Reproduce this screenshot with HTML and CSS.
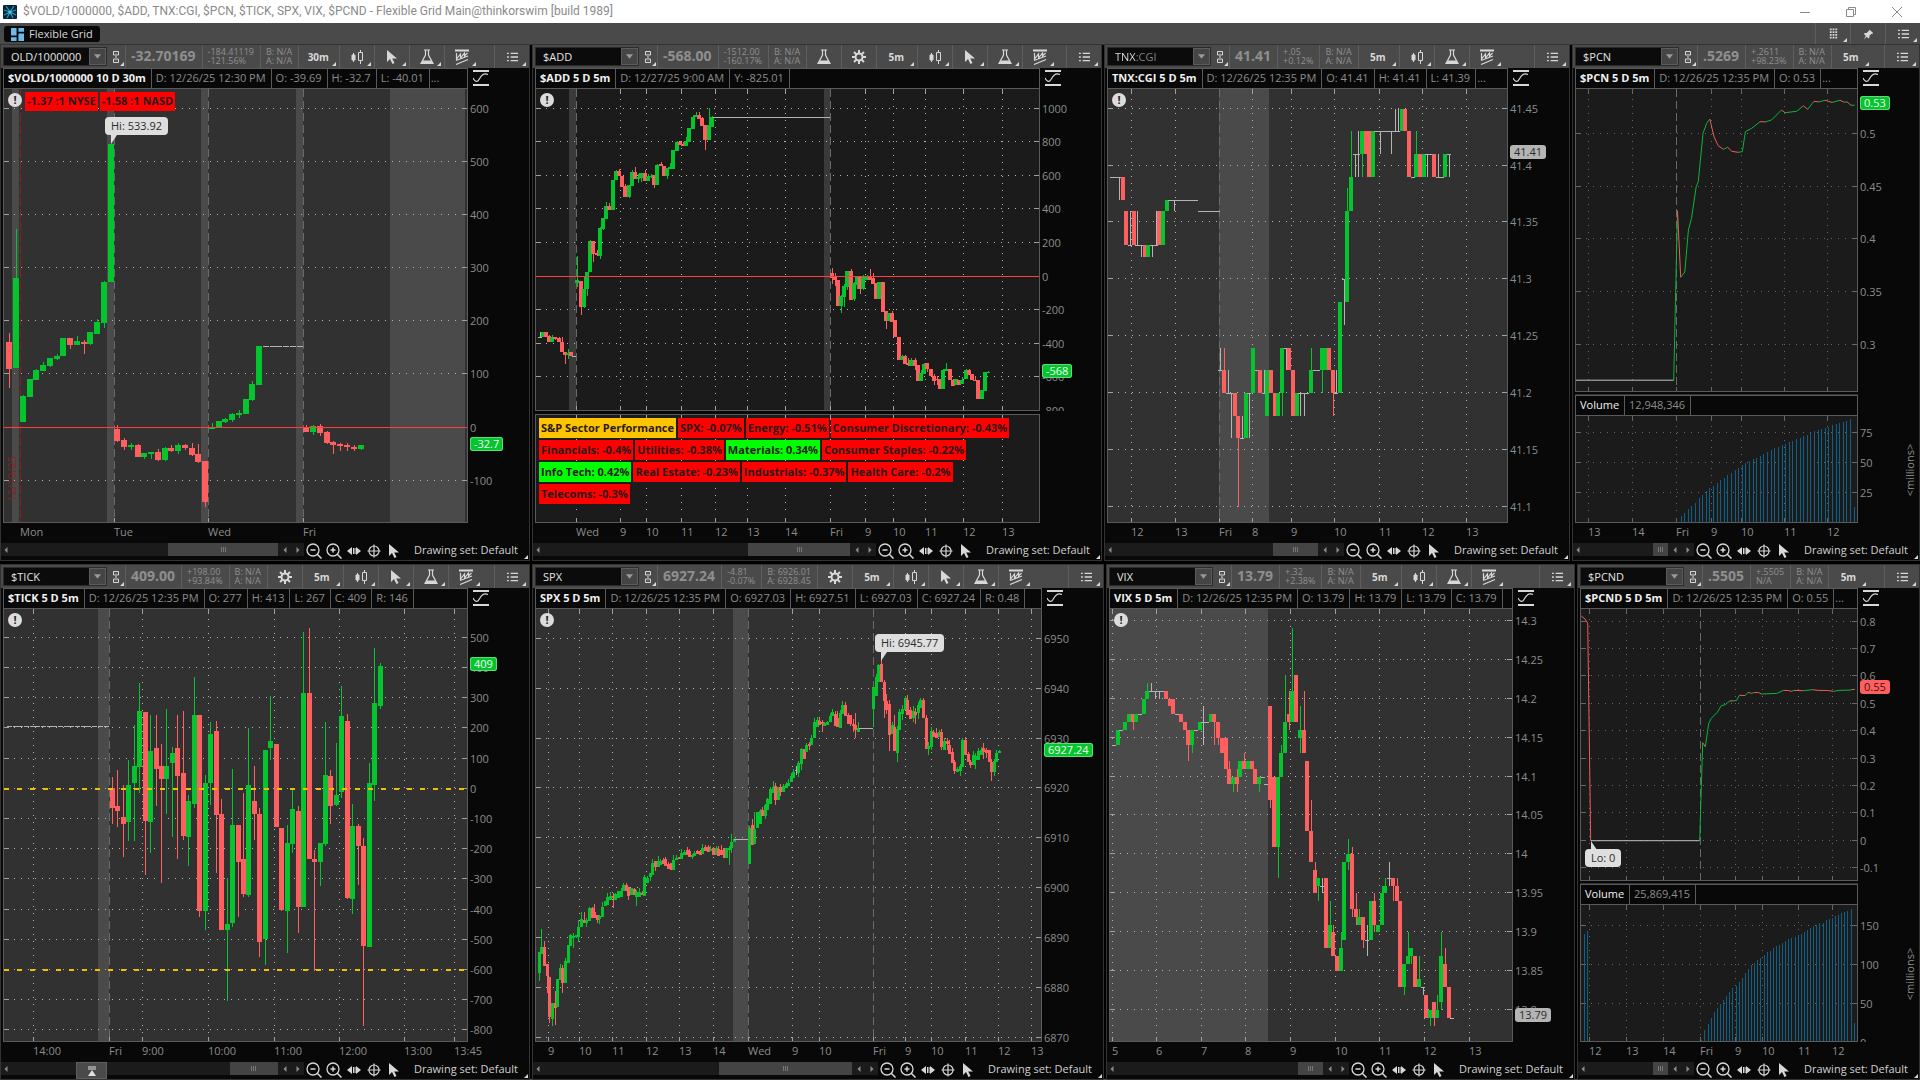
FILE: index.html
```html
<!DOCTYPE html>
<html lang="en">
<head>
<meta charset="utf-8">
<meta name="viewport" content="width=device-width, initial-scale=1">
<title>Flexible Grid Main@thinkorswim [build 1989]</title>
<link rel="stylesheet" href="styles.css">
</head>
<body>
<svg class="sprite" aria-hidden="true">
  <symbol id="i-link" viewBox="0 0 8 14"><path d="M1.500 5V1.500h5V5M1.500 9v3.500h5V9M4 3.500v7M1.500 5h1.500M5 5h1.500M1.500 9h1.500M5 9h1.500" fill="none" stroke="currentColor"/></symbol>
  <symbol id="i-candles" viewBox="0 0 16 16"><path d="M4.500 4v9M11.500 1v14" stroke="currentColor"/><path d="M3 6h3v5H3z" fill="currentColor" stroke="currentColor"/><path d="M9.500 3.500h4v8h-4z" fill="#4a4a4a" stroke="currentColor"/></symbol>
  <symbol id="i-cursor" viewBox="0 0 16 16"><path d="M3 1v12l3-3 2.500 5 2-1L8.200 9.500H13z" fill="currentColor"/></symbol>
  <symbol id="i-flask" viewBox="0 0 16 16"><path d="M5 1h6M6.500 1v5L2 14.500h12L9.500 6V1" fill="none" stroke="currentColor" stroke-width="1.200"/><path d="M4 11.500h8l2 3.500h-12z" fill="currentColor"/></symbol>
  <symbol id="i-pattern" viewBox="0 0 16 16"><path d="M1 1.500h14" stroke="currentColor" stroke-width="2"/><path d="M2.500 4v6l4-5v4l4-5v3l3-3M2 11.500l12-4.500M2 15.500l12-5" fill="none" stroke="currentColor" stroke-width="1.200"/></symbol>
  <symbol id="i-list" viewBox="0 0 12 12"><path d="M0 2h2M4 2h8M0 6h2M4 6h8M0 10h2M4 10h8" stroke="currentColor" stroke-width="1.500"/></symbol>
  <symbol id="i-gear" viewBox="0 0 16 16"><circle cx="8" cy="8" r="3.500" fill="none" stroke="currentColor" stroke-width="2"/><path d="M8 1v3M8 12v3M1 8h3M12 8h3M3 3l2.300 2.300M10.700 10.700L13 13M13 3l-2.300 2.300M5.300 10.700L3 13" stroke="currentColor" stroke-width="2"/></symbol>
  <symbol id="i-scale" viewBox="0 0 16 16"><path d="M0 1h16M0 15h16" stroke="currentColor" stroke-width="2"/><path d="M0 8c1.500 3 4 5 6 1.500S10 2.500 15 4.500" fill="none" stroke="currentColor" stroke-width="1.200"/></symbol>
  <symbol id="i-zoomout" viewBox="0 0 16 16"><circle cx="7" cy="7" r="6" fill="none" stroke="currentColor" stroke-width="1.300"/><path d="M4.500 7h5M11 11l4.500 4.500" stroke="currentColor" stroke-width="1.500"/></symbol>
  <symbol id="i-zoomin" viewBox="0 0 16 16"><circle cx="7" cy="7" r="6" fill="none" stroke="currentColor" stroke-width="1.300"/><path d="M4.500 7h5M7 4.500v5M11 11l4.500 4.500" stroke="currentColor" stroke-width="1.500"/></symbol>
  <symbol id="i-move" viewBox="0 0 16 16"><path d="M1 8l5-4v8zM15 8l-5-4v8z" fill="currentColor"/><path d="M7.500 5v6M9 5v6" stroke="currentColor"/></symbol>
  <symbol id="i-cross" viewBox="0 0 16 16"><circle cx="8" cy="8" r="5" fill="none" stroke="currentColor" stroke-width="1.200"/><path d="M8 1.500v13M1.500 8h13" stroke="currentColor" stroke-width="1.200"/></symbol>
  <symbol id="i-down" viewBox="0 0 8 5"><path d="M0 0h8L4 5z" fill="currentColor"/></symbol>
  <symbol id="i-left" viewBox="0 0 4 8"><path d="M4 0v8L0 4z" fill="currentColor"/></symbol>
  <symbol id="i-right" viewBox="0 0 4 8"><path d="M0 0v8l4-4z" fill="currentColor"/></symbol>
</svg>

<header class="titlebar">
  <svg class="app-icon" viewBox="0 0 14 14"><rect width="14" height="14" rx="1" fill="#082335"/><path d="M7 7L3 1M7 7l4-6M7 7L1 5M7 7l6-2M7 7l-6 3M7 7l6 3M7 7l-3 6M7 7l3 6" stroke="#1d9bbf" stroke-width="1.300"/><circle cx="7" cy="7" r="1.500" fill="#49c8e6"/></svg>
  <h1 class="window-title">$VOLD/1000000, $ADD, TNX:CGI, $PCN, $TICK, SPX, VIX, $PCND - Flexible Grid Main@thinkorswim [build 1989]</h1>
  <div class="window-controls">
    <button aria-label="Minimize"><svg viewBox="0 0 10 10"><path d="M0 5.500h10" stroke="currentColor"/></svg></button>
    <button aria-label="Restore"><svg viewBox="0 0 10 10"><path d="M.5 2.500h7v7h-7zM2.500 2.500v-2h7v7h-2" fill="none" stroke="currentColor"/></svg></button>
    <button aria-label="Close"><svg viewBox="0 0 10 10"><path d="M0 0l10 10M10 0L0 10" stroke="currentColor"/></svg></button>
  </div>
</header>

<nav class="tabbar">
  <button class="tab"><svg viewBox="0 0 14 14"><path d="M0 0h6v8H0zM8 0h6v4H8zM0 10h6v4H0zM8 6h6v8H8z" fill="#6db9e8"/></svg>Flexible Grid</button>
  <div class="tabbar-tools">
    <button class="tool more" aria-label="Layout grid"><svg class="icon-s" viewBox="0 0 12 12"><path d="M2 1h2M5 1h2M8 1h2M2 4h2M5 4h2M8 4h2M2 7h2M5 7h2M8 7h2M2 10h2M5 10h2M8 10h2" stroke="currentColor" stroke-width="2"/></svg></button>
    <button class="tool" aria-label="Pin"><svg class="icon-s" viewBox="0 0 12 12"><path d="M7 1l4 4-1 1-1 0-2 2 0 2-1 1-2-2-3 3 2-4-2-2 1-1h2l3-3z" fill="currentColor"/></svg></button>
    <button class="tool more" aria-label="Menu"><svg class="icon-s"><use href="#i-list"/></svg></button>
  </div>
</nav>

<main class="workspace">
<div class="panel-row panel-row-top">

<section class="panel">
  <div class="toolbar">
    <div class="symbol"><input aria-label="Symbol" value="OLD/1000000"><button aria-label="Symbols"><svg><use href="#i-down"/></svg></button></div>
    <button class="link more" aria-label="Link"><svg><use href="#i-link"/></svg></button>
    <strong class="last">-32.70169</strong>
    <div class="pair"><span>-184.41119</span><span>-121.56%</span></div>
    <div class="pair"><span>B: N/A</span><span>A: N/A</span></div>
    <button class="tool more period">30m</button>
    <button class="tool more" aria-label="Style"><svg><use href="#i-candles"/></svg></button>
    <button class="tool more" aria-label="Pointer"><svg><use href="#i-cursor"/></svg></button>
    <button class="tool more" aria-label="Studies"><svg><use href="#i-flask"/></svg></button>
    <button class="tool more" aria-label="Patterns"><svg><use href="#i-pattern"/></svg></button>
    <button class="tool more menu" aria-label="Menu"><svg class="icon-s"><use href="#i-list"/></svg></button>
  </div>
  <div class="chart">
    <div class="infobar"><div class="info"><b>$VOLD/1000000 10 D 30m</b><span>D: 12/26/25 12:30 PM</span><span>O: -39.69</span><span>H: -32.7</span><span>L: -40.01</span><i>...</i></div><button aria-label="Scale"><svg><use href="#i-scale"/></svg></button></div>
    <div class="pane"><div class="plot" data-chart="vold">
      <div class="labels"><span class="alert">!</span><span class="chip down">-1.37 :1 NYSE</span><span class="chip down">-1.58 :1 NASD</span></div>
      <span class="expiry">12/19/25</span>
    </div><div class="price-axis"></div></div>
    <div class="time-axis"></div>
  </div>
  <div class="footer"><div class="scroll"><button aria-label="Back"><svg><use href="#i-left"/></svg></button><div class="track"><div class="thumb" style="width:41%"></div></div><button aria-label="Left"><svg><use href="#i-left"/></svg></button><button aria-label="Right"><svg><use href="#i-right"/></svg></button></div><div class="footer-tools"><button aria-label="Zoom out"><svg><use href="#i-zoomout"/></svg></button><button aria-label="Zoom in"><svg><use href="#i-zoomin"/></svg></button><button aria-label="Pan"><svg><use href="#i-move"/></svg></button><button aria-label="Crosshair"><svg><use href="#i-cross"/></svg></button><button aria-label="Pointer"><svg><use href="#i-cursor"/></svg></button></div><button class="drawing more">Drawing set: Default</button></div>
</section>

<section class="panel">
  <div class="toolbar">
    <div class="symbol"><input aria-label="Symbol" value="$ADD"><button aria-label="Symbols"><svg><use href="#i-down"/></svg></button></div>
    <button class="link more" aria-label="Link"><svg><use href="#i-link"/></svg></button>
    <strong class="last">-568.00</strong>
    <div class="pair"><span>-1512.00</span><span>-160.17%</span></div>
    <div class="pair"><span>B: N/A</span><span>A: N/A</span></div>
    <button class="tool" aria-label="Edit studies"><svg><use href="#i-flask"/></svg></button>
    <button class="tool" aria-label="Settings"><svg><use href="#i-gear"/></svg></button>
    <button class="tool more period">5m</button>
    <button class="tool more" aria-label="Style"><svg><use href="#i-candles"/></svg></button>
    <button class="tool more" aria-label="Pointer"><svg><use href="#i-cursor"/></svg></button>
    <button class="tool more" aria-label="Studies"><svg><use href="#i-flask"/></svg></button>
    <button class="tool more" aria-label="Patterns"><svg><use href="#i-pattern"/></svg></button>
    <button class="tool more menu" aria-label="Menu"><svg class="icon-s"><use href="#i-list"/></svg></button>
  </div>
  <div class="chart">
    <div class="infobar"><div class="info"><b>$ADD 5 D 5m</b><span>D: 12/27/25 9:00 AM</span><span>Y: -825.01</span></div><button aria-label="Scale"><svg><use href="#i-scale"/></svg></button></div>
    <div class="pane pane-add"><div class="plot dark" data-chart="add"><div class="labels"><span class="alert">!</span></div></div><div class="price-axis"></div></div>
    <div class="splitter splitter-wide"></div>
    <div class="pane pane-sectors"><div class="plot dark framed" data-chart="sectors">
      <div class="sector-rows">
        <div><span class="chip title">S&amp;P Sector Performance</span><span class="chip down">SPX: -0.07%</span><span class="chip down">Energy: -0.51%</span><span class="chip down">Consumer Discretionary: -0.43%</span></div>
        <div><span class="chip down">Financials: -0.4%</span><span class="chip down">Utilities: -0.38%</span><span class="chip up">Materials: 0.34%</span><span class="chip down">Consumer Staples: -0.22%</span></div>
        <div><span class="chip up">Info Tech: 0.42%</span><span class="chip down">Real Estate: -0.23%</span><span class="chip down">Industrials: -0.37%</span><span class="chip down">Health Care: -0.2%</span></div>
        <div><span class="chip down">Telecoms: -0.3%</span></div>
      </div>
    </div><div class="price-axis"></div></div>
    <div class="time-axis"></div>
  </div>
  <div class="footer"><div class="scroll"><button aria-label="Back"><svg><use href="#i-left"/></svg></button><div class="track"><div class="thumb" style="width:33%"></div></div><button aria-label="Left"><svg><use href="#i-left"/></svg></button><button aria-label="Right"><svg><use href="#i-right"/></svg></button></div><div class="footer-tools"><button aria-label="Zoom out"><svg><use href="#i-zoomout"/></svg></button><button aria-label="Zoom in"><svg><use href="#i-zoomin"/></svg></button><button aria-label="Pan"><svg><use href="#i-move"/></svg></button><button aria-label="Crosshair"><svg><use href="#i-cross"/></svg></button><button aria-label="Pointer"><svg><use href="#i-cursor"/></svg></button></div><button class="drawing more">Drawing set: Default</button></div>
</section>

<section class="panel">
  <div class="toolbar">
    <div class="symbol"><input class="two-tone" aria-label="Symbol" value="TNX:CGI"><button aria-label="Symbols"><svg><use href="#i-down"/></svg></button></div>
    <button class="link more" aria-label="Link"><svg><use href="#i-link"/></svg></button>
    <strong class="last">41.41</strong>
    <div class="pair"><span>+.05</span><span>+0.12%</span></div>
    <div class="pair"><span>B: N/A</span><span>A: N/A</span></div>
    <button class="tool more period">5m</button>
    <button class="tool more" aria-label="Style"><svg><use href="#i-candles"/></svg></button>
    <button class="tool more" aria-label="Studies"><svg><use href="#i-flask"/></svg></button>
    <button class="tool more" aria-label="Patterns"><svg><use href="#i-pattern"/></svg></button>
    <button class="tool more menu" aria-label="Menu"><svg class="icon-s"><use href="#i-list"/></svg></button>
  </div>
  <div class="chart">
    <div class="infobar"><div class="info"><b>TNX:CGI 5 D 5m</b><span>D: 12/26/25 12:35 PM</span><span>O: 41.41</span><span>H: 41.41</span><span>L: 41.39</span><i>...</i></div><button aria-label="Scale"><svg><use href="#i-scale"/></svg></button></div>
    <div class="pane"><div class="plot" data-chart="tnx"><div class="labels"><span class="alert">!</span></div></div><div class="price-axis"></div></div>
    <div class="time-axis"></div>
  </div>
  <div class="footer"><div class="scroll"><button aria-label="Back"><svg><use href="#i-left"/></svg></button><div class="track"><div class="thumb" style="width:22%"></div></div><button aria-label="Left"><svg><use href="#i-left"/></svg></button><button aria-label="Right"><svg><use href="#i-right"/></svg></button></div><div class="footer-tools"><button aria-label="Zoom out"><svg><use href="#i-zoomout"/></svg></button><button aria-label="Zoom in"><svg><use href="#i-zoomin"/></svg></button><button aria-label="Pan"><svg><use href="#i-move"/></svg></button><button aria-label="Crosshair"><svg><use href="#i-cross"/></svg></button><button aria-label="Pointer"><svg><use href="#i-cursor"/></svg></button></div><button class="drawing more">Drawing set: Default</button></div>
</section>

<section class="panel">
  <div class="toolbar">
    <div class="symbol"><input aria-label="Symbol" value="$PCN"><button aria-label="Symbols"><svg><use href="#i-down"/></svg></button></div>
    <button class="link more" aria-label="Link"><svg><use href="#i-link"/></svg></button>
    <strong class="last">.5269</strong>
    <div class="pair"><span>+.2611</span><span>+98.23%</span></div>
    <div class="pair"><span>B: N/A</span><span>A: N/A</span></div>
    <button class="tool more period">5m</button>
    <button class="tool more menu" aria-label="Menu"><svg class="icon-s"><use href="#i-list"/></svg></button>
  </div>
  <div class="chart">
    <div class="infobar"><div class="info"><b>$PCN 5 D 5m</b><span>D: 12/26/25 12:35 PM</span><span>O: 0.53</span><i>...</i></div><button aria-label="Scale"><svg><use href="#i-scale"/></svg></button></div>
    <div class="pane pane-pcn"><div class="plot dark" data-chart="pcn"></div><div class="price-axis"></div></div>
    <div class="splitter"></div>
    <div class="infobar"><div class="info"><em>Volume</em><span>12,948,346</span></div></div>
    <div class="pane pane-pcn-vol"><div class="plot dark" data-chart="pcnvol"></div><div class="price-axis"></div></div>
    <div class="time-axis"></div>
  </div>
  <div class="footer"><div class="scroll"><button aria-label="Back"><svg><use href="#i-left"/></svg></button><div class="track"><div class="thumb" style="width:17%"></div></div><button aria-label="Left"><svg><use href="#i-left"/></svg></button><button aria-label="Right"><svg><use href="#i-right"/></svg></button></div><div class="footer-tools"><button aria-label="Zoom out"><svg><use href="#i-zoomout"/></svg></button><button aria-label="Zoom in"><svg><use href="#i-zoomin"/></svg></button><button aria-label="Pan"><svg><use href="#i-move"/></svg></button><button aria-label="Crosshair"><svg><use href="#i-cross"/></svg></button><button aria-label="Pointer"><svg><use href="#i-cursor"/></svg></button></div><button class="drawing more">Drawing set: Default</button></div>
</section>
</div>

<div class="panel-row panel-row-bottom">

<section class="panel">
  <div class="toolbar">
    <div class="symbol"><input aria-label="Symbol" value="$TICK"><button aria-label="Symbols"><svg><use href="#i-down"/></svg></button></div>
    <button class="link more" aria-label="Link"><svg><use href="#i-link"/></svg></button>
    <strong class="last">409.00</strong>
    <div class="pair"><span>+198.00</span><span>+93.84%</span></div>
    <div class="pair"><span>B: N/A</span><span>A: N/A</span></div>
    <button class="tool" aria-label="Settings"><svg><use href="#i-gear"/></svg></button>
    <button class="tool more period">5m</button>
    <button class="tool more" aria-label="Style"><svg><use href="#i-candles"/></svg></button>
    <button class="tool more" aria-label="Pointer"><svg><use href="#i-cursor"/></svg></button>
    <button class="tool more" aria-label="Studies"><svg><use href="#i-flask"/></svg></button>
    <button class="tool more" aria-label="Patterns"><svg><use href="#i-pattern"/></svg></button>
    <button class="tool more menu" aria-label="Menu"><svg class="icon-s"><use href="#i-list"/></svg></button>
  </div>
  <div class="chart">
    <div class="infobar"><div class="info"><b>$TICK 5 D 5m</b><span>D: 12/26/25 12:35 PM</span><span>O: 277</span><span>H: 413</span><span>L: 267</span><span>C: 409</span><span>R: 146</span></div><button aria-label="Scale"><svg><use href="#i-scale"/></svg></button></div>
    <div class="pane"><div class="plot" data-chart="tick"><div class="labels"><span class="alert">!</span></div></div><div class="price-axis"></div></div>
    <div class="time-axis"></div>
  </div>
  <div class="footer"><div class="scroll"><button aria-label="Back"><svg><use href="#i-left"/></svg></button><div class="track"><div class="thumb" style="width:18%"></div></div><button aria-label="Left"><svg><use href="#i-left"/></svg></button><button aria-label="Right"><svg><use href="#i-right"/></svg></button></div><div class="footer-tools"><button aria-label="Zoom out"><svg><use href="#i-zoomout"/></svg></button><button aria-label="Zoom in"><svg><use href="#i-zoomin"/></svg></button><button aria-label="Pan"><svg><use href="#i-move"/></svg></button><button aria-label="Crosshair"><svg><use href="#i-cross"/></svg></button><button aria-label="Pointer"><svg><use href="#i-cursor"/></svg></button></div><button class="drawing more">Drawing set: Default</button></div>
  <button class="drawer" aria-label="Open drawer"><svg viewBox="0 0 10 10"><path d="M1 1h8M1 3h8" stroke="currentColor"/><path d="M5 4l4 6H1z" fill="currentColor"/></svg></button>
</section>

<section class="panel">
  <div class="toolbar">
    <div class="symbol"><input aria-label="Symbol" value="SPX"><button aria-label="Symbols"><svg><use href="#i-down"/></svg></button></div>
    <button class="link more" aria-label="Link"><svg><use href="#i-link"/></svg></button>
    <strong class="last">6927.24</strong>
    <div class="pair"><span>-4.81</span><span>-0.07%</span></div>
    <div class="pair"><span>B: 6926.01</span><span>A: 6928.45</span></div>
    <button class="tool" aria-label="Settings"><svg><use href="#i-gear"/></svg></button>
    <button class="tool more period">5m</button>
    <button class="tool more" aria-label="Style"><svg><use href="#i-candles"/></svg></button>
    <button class="tool more" aria-label="Pointer"><svg><use href="#i-cursor"/></svg></button>
    <button class="tool more" aria-label="Studies"><svg><use href="#i-flask"/></svg></button>
    <button class="tool more" aria-label="Patterns"><svg><use href="#i-pattern"/></svg></button>
    <button class="tool more menu" aria-label="Menu"><svg class="icon-s"><use href="#i-list"/></svg></button>
  </div>
  <div class="chart">
    <div class="infobar"><div class="info"><b>SPX 5 D 5m</b><span>D: 12/26/25 12:35 PM</span><span>O: 6927.03</span><span>H: 6927.51</span><span>L: 6927.03</span><span>C: 6927.24</span><span>R: 0.48</span></div><button aria-label="Scale"><svg><use href="#i-scale"/></svg></button></div>
    <div class="pane"><div class="plot" data-chart="spx"><div class="labels"><span class="alert">!</span></div></div><div class="price-axis"></div></div>
    <div class="time-axis"></div>
  </div>
  <div class="footer"><div class="scroll"><button aria-label="Back"><svg><use href="#i-left"/></svg></button><div class="track"><div class="thumb" style="width:43%"></div></div><button aria-label="Left"><svg><use href="#i-left"/></svg></button><button aria-label="Right"><svg><use href="#i-right"/></svg></button></div><div class="footer-tools"><button aria-label="Zoom out"><svg><use href="#i-zoomout"/></svg></button><button aria-label="Zoom in"><svg><use href="#i-zoomin"/></svg></button><button aria-label="Pan"><svg><use href="#i-move"/></svg></button><button aria-label="Crosshair"><svg><use href="#i-cross"/></svg></button><button aria-label="Pointer"><svg><use href="#i-cursor"/></svg></button></div><button class="drawing more">Drawing set: Default</button></div>
</section>

<section class="panel">
  <div class="toolbar">
    <div class="symbol"><input aria-label="Symbol" value="VIX"><button aria-label="Symbols"><svg><use href="#i-down"/></svg></button></div>
    <button class="link more" aria-label="Link"><svg><use href="#i-link"/></svg></button>
    <strong class="last">13.79</strong>
    <div class="pair"><span>+.32</span><span>+2.38%</span></div>
    <div class="pair"><span>B: N/A</span><span>A: N/A</span></div>
    <button class="tool more period">5m</button>
    <button class="tool more" aria-label="Style"><svg><use href="#i-candles"/></svg></button>
    <button class="tool more" aria-label="Studies"><svg><use href="#i-flask"/></svg></button>
    <button class="tool more" aria-label="Patterns"><svg><use href="#i-pattern"/></svg></button>
    <button class="tool more menu" aria-label="Menu"><svg class="icon-s"><use href="#i-list"/></svg></button>
  </div>
  <div class="chart">
    <div class="infobar"><div class="info"><b>VIX 5 D 5m</b><span>D: 12/26/25 12:35 PM</span><span>O: 13.79</span><span>H: 13.79</span><span>L: 13.79</span><span>C: 13.79</span></div><button aria-label="Scale"><svg><use href="#i-scale"/></svg></button></div>
    <div class="pane"><div class="plot" data-chart="vix"><div class="labels"><span class="alert">!</span></div></div><div class="price-axis"></div></div>
    <div class="time-axis"></div>
  </div>
  <div class="footer"><div class="scroll"><button aria-label="Back"><svg><use href="#i-left"/></svg></button><div class="track"><div class="thumb" style="width:12%"></div></div><button aria-label="Left"><svg><use href="#i-left"/></svg></button><button aria-label="Right"><svg><use href="#i-right"/></svg></button></div><div class="footer-tools"><button aria-label="Zoom out"><svg><use href="#i-zoomout"/></svg></button><button aria-label="Zoom in"><svg><use href="#i-zoomin"/></svg></button><button aria-label="Pan"><svg><use href="#i-move"/></svg></button><button aria-label="Crosshair"><svg><use href="#i-cross"/></svg></button><button aria-label="Pointer"><svg><use href="#i-cursor"/></svg></button></div><button class="drawing more">Drawing set: Default</button></div>
</section>

<section class="panel">
  <div class="toolbar">
    <div class="symbol"><input aria-label="Symbol" value="$PCND"><button aria-label="Symbols"><svg><use href="#i-down"/></svg></button></div>
    <button class="link more" aria-label="Link"><svg><use href="#i-link"/></svg></button>
    <strong class="last">.5505</strong>
    <div class="pair"><span>+.5505</span><span>N/A</span></div>
    <div class="pair"><span>B: N/A</span><span>A: N/A</span></div>
    <button class="tool more period">5m</button>
    <button class="tool more menu" aria-label="Menu"><svg class="icon-s"><use href="#i-list"/></svg></button>
  </div>
  <div class="chart">
    <div class="infobar"><div class="info"><b>$PCND 5 D 5m</b><span>D: 12/26/25 12:35 PM</span><span>O: 0.55</span><i>...</i></div><button aria-label="Scale"><svg><use href="#i-scale"/></svg></button></div>
    <div class="pane pane-pcnd"><div class="plot dark" data-chart="pcnd"></div><div class="price-axis"></div></div>
    <div class="splitter"></div>
    <div class="infobar"><div class="info"><em>Volume</em><span>25,869,415</span></div></div>
    <div class="pane pane-pcnd-vol"><div class="plot dark" data-chart="pcndvol"></div><div class="price-axis"></div></div>
    <div class="time-axis"></div>
  </div>
  <div class="footer"><div class="scroll"><button aria-label="Back"><svg><use href="#i-left"/></svg></button><div class="track"><div class="thumb" style="width:18%"></div></div><button aria-label="Left"><svg><use href="#i-left"/></svg></button><button aria-label="Right"><svg><use href="#i-right"/></svg></button></div><div class="footer-tools"><button aria-label="Zoom out"><svg><use href="#i-zoomout"/></svg></button><button aria-label="Zoom in"><svg><use href="#i-zoomin"/></svg></button><button aria-label="Pan"><svg><use href="#i-move"/></svg></button><button aria-label="Crosshair"><svg><use href="#i-cross"/></svg></button><button aria-label="Pointer"><svg><use href="#i-cursor"/></svg></button></div><button class="drawing more">Drawing set: Default</button></div>
</section>
</div>
</main>
<script src="charts.js"></script>
</body>
</html>
```
FILE: styles.css
```css
* { box-sizing: border-box; }

body {
  margin: 0;
  min-height: 100vh;
  display: flex;
  flex-direction: column;
  background: #000;
  color: #8c8c8c;
  font: 11px/14px "Open Sans", "Noto Sans", sans-serif;
}

button, input {
  font: inherit;
  color: inherit;
  background: none;
  border: 0;
  padding: 0;
  margin: 0;
}

.sprite { display: none; }

/* window title */
.titlebar {
  display: flex;
  align-items: center;
  height: 23px;
  padding-left: 3px;
  background: #fff;
  color: #8a8a8a;
}
.app-icon { width: 14px; height: 14px; margin-right: 6px; }
.window-title { margin: 0; font: 400 12px/23px Roboto, "Open Sans", sans-serif; }
.window-controls { display: flex; margin-left: auto; }
.window-controls button { width: 46px; height: 22px; display: grid; place-items: center; }
.window-controls svg { width: 10px; height: 10px; }

/* tab strip */
.tabbar {
  display: flex;
  justify-content: space-between;
  height: 22px;
  background: #4a4a4a;
  border-bottom: 1px solid #333;
}
.tab {
  display: flex;
  align-items: center;
  gap: 5px;
  height: 16px;
  margin: 3px 0 0 4px;
  padding: 0 7px;
  border-radius: 3px;
  background: #080808;
  color: #d8d8d8;
}
.tab svg { width: 13px; height: 13px; }
.tabbar-tools { display: flex; }

/* panel grid */
.workspace {
  flex: 1;
  display: grid;
  grid-template-rows: 515fr 514fr;
  gap: 5px;
  padding: 0 1px;
  border-bottom: 1px solid #555;
}
.panel-row { display: grid; gap: 4px; min-height: 0; }
.panel-row-top { grid-template-columns: 528fr 568fr 464fr 346fr; }
.panel-row-bottom { grid-template-columns: 528fr 570fr 467fr 341fr; }
.panel {
  position: relative;
  display: flex;
  flex-direction: column;
  min-width: 0;
  min-height: 0;
  background: #080808;
  outline: 1px solid #333;
}

/* toolbar */
.toolbar {
  display: flex;
  height: 23px;
  padding-left: 2px;
  background: #4a4a4a;
  color: #8f8f8f;
}
.symbol {
  display: flex;
  flex: 0 0 104px;
  min-width: 0;
  height: 19px;
  margin-top: 2px;
  border: 1px solid #2b2b2b;
  background: #0b0b0b;
}
.symbol input { flex: 1; width: 0; min-width: 0; padding-left: 7px; color: #e4e4e4; outline: 0; }
.symbol .two-tone {
  background: linear-gradient(90deg, #e4e4e4 28px, #8c8c8c 28px);
  background-clip: text;
  -webkit-background-clip: text;
  color: transparent;
}
.symbol button { flex: 0 0 17px; background: #454545; border: 1px solid #5c5c5c; display: grid; place-items: center; color: #9a9a9a; }
.symbol button svg { width: 7px; height: 5px; }
.link { position: relative; flex: 0 0 18px; color: #d8d8d8; display: grid; place-items: center; }
.link svg { width: 8px; height: 14px; }
.last, .pair, .tool { border-left: 1px solid #5e5e5e; }
.last { padding: 0 6px 0 5px; font-size: 14px; line-height: 22px; }
.pair { display: flex; flex-direction: column; padding: 2px 6px 0 5px; font-size: 9px; line-height: 9px; white-space: nowrap; }
.tool {
  position: relative;
  flex: 0 0 35px;
  display: grid;
  place-items: center;
  color: #d8d8d8;
}
.tool svg { width: 16px; height: 16px; }
.tool .icon-s { width: 11px; height: 12px; }
.tabbar-tools .tool { width: 35px; }
.period { flex-basis: 41px; font-size: 10px; font-weight: 700; padding-right: 2px; }
.menu { margin-left: auto; }
.more::after {
  content: "";
  position: absolute;
  right: 3px;
  bottom: 2px;
  border-left: 4px solid transparent;
  border-bottom: 4px solid #d8d8d8;
}
.link.more::after { right: 1px; }

/* chart column */
.chart {
  flex: 1;
  display: flex;
  flex-direction: column;
  min-height: 0;
  padding-left: 2px;
}
.infobar { display: grid; grid-template-columns: minmax(0, 1fr) 61px; height: 21px; flex: none; }
.info { display: flex; border: 1px solid #5a5a5a; line-height: 18px; white-space: nowrap; overflow: hidden; }
.info > * { padding: 0 5px 0 4px; font-style: normal; }
.info b, .info em { color: #f0f0f0; }
.info b, .info em, .info span { border-right: 1px solid #5a5a5a; }
.info i { padding: 0 1px; }
.infobar button { width: 16px; margin: 2px 0 0 5px; color: #d8d8d8; height: 16px; }
.infobar svg { width: 16px; height: 16px; display: block; }

.pane { flex: 1 1 0; display: grid; grid-template-columns: minmax(0, 1fr) 61px; min-height: 0; }
.pane-add { flex-grow: 322; }
.pane-sectors { flex-grow: 108; }
.pane-pcn { flex-grow: 303; }
.pane-pcn-vol { flex-grow: 107; }
.pane-pcnd { flex-grow: 272; }
.pane-pcnd-vol { flex-grow: 137; }
.splitter { height: 3px; margin-right: 61px; border-bottom: 1px solid #333; }
.splitter-wide { height: 4px; }
.plot {
  position: relative;
  background: #313131;
  border: 1px solid #5a5a5a;
  border-top: 0;
  min-height: 0;
}
.plot.dark { background: #1b1b1b; }
.plot.framed { box-shadow: 0 -1px #5a5a5a; }
.plot > svg { position: absolute; inset: 0; width: 100%; height: 100%; shape-rendering: crispEdges; }
.price-axis { position: relative; overflow: hidden; }
.price-axis span { position: absolute; left: 2px; margin-top: -7px; }
.price-axis .last-price {
  padding: 0 4px;
  margin-top: -8px;
  border-radius: 3px;
  background: #05c52f;
  color: #f2fff4;
  box-shadow: inset 0 0 0 1px #5fdc78;
}
.price-axis .last-price.flat { background: #b4b4b4; color: #2b2b2b; box-shadow: none; }
.price-axis .last-price.falling { background: #ff5f5f; color: #3a1414; box-shadow: none; }
.price-axis .unit { left: auto; right: 2px; margin: 0; writing-mode: vertical-rl; transform: translateY(-50%) rotate(180deg); }
.time-axis { position: relative; flex: none; height: 20px; margin: 0 62px 0 1px; }
.time-axis span { position: absolute; top: 2px; white-space: nowrap; }

/* overlays drawn on top of a plot */
.labels { position: relative; display: flex; gap: 2px; padding: 3px; }
.alert {
  width: 14px;
  height: 14px;
  margin: 1px 1px 0 1px;
  border-radius: 7px;
  background: #dcdcdc;
  color: #222;
  font-weight: 700;
  text-align: center;
}
.chip { height: 20px; padding: 0 2px; line-height: 19px; font-weight: 700; color: #2a1a1a; white-space: nowrap; }
.chip.down { background: #f00; }
.chip.up { background: #0f0; }
.chip.title { background: #ffc400; }
.labels .chip { height: 19px; line-height: 18px; }
.sector-rows { position: relative; display: grid; gap: 2px; padding: 3px; }
.sector-rows > div { display: flex; gap: 2px; }
.expiry {
  position: absolute;
  left: 1px;
  bottom: 20px;
  color: #8f1f1f;
  writing-mode: vertical-rl;
  transform: rotate(180deg);
}
.callout {
  position: absolute;
  padding: 2px 6px;
  margin: -27px 0 0 -6px;
  border-radius: 4px;
  background: #dedede;
  color: #2b2b2b;
  white-space: nowrap;
}
.callout::after {
  content: "";
  position: absolute;
  left: 6px;
  top: 18px;
  border-top: 9px solid #dedede;
  border-right: 6px solid transparent;
}
.callout.below { margin-top: 8px; }
.callout.below::after { top: -8px; border-top: 0; border-bottom: 9px solid #dedede; }

/* svg strokes */
.band { fill: #4a4a4a; }
.dark .band { fill: #3a3a3a; }
.grid { stroke: #b4b4b4; stroke-dasharray: 1 6; }
.tick { stroke: #a0a0a0; }
.dim .grid, .dim .tick { stroke: #686868; }
.day { stroke: #6a6a6a; stroke-dasharray: 8 4; }
.zero { stroke: #ff3d3d; }
.level { stroke: #f0c000; stroke-width: 2; stroke-dasharray: 5 8; }
.expiry-line { stroke: #8f1f1f; stroke-dasharray: 9 3; }
.rise { fill: #05c52f; }
.fall { fill: #ff5f5f; }
.still { fill: #b4b4b4; }
.volume { fill: #0f5f86; }
.seg { fill: none; shape-rendering: auto; stroke-width: 1; }
.seg-rise { stroke: #0db534; }
.seg-fall { stroke: #f05a5a; }
.seg-still { stroke: #c0c0c0; }

/* footer */
.footer { display: flex; height: 17px; flex: none; }
.scroll { flex: 1; display: flex; height: 13px; background: #1b1b1b; color: #8c8c8c; min-width: 0; }
.scroll button { width: 13px; display: grid; place-items: center; }
.scroll button svg { width: 4px; height: 6px; }
.scroll button:first-child { width: 9px; }
.track { flex: 1; display: flex; justify-content: flex-end; }
.thumb { background: repeating-linear-gradient(90deg, #777 0 1px, #444 1px 2px) center / 5px 5px no-repeat #444; }
.footer-tools { display: flex; flex: none; }
.footer-tools button { width: 20px; height: 14px; display: grid; place-items: center; color: #d8d8d8; }
.footer-tools svg { width: 16px; height: 16px; }
.drawing { position: relative; flex: 0 0 125px; height: 15px; padding: 0 0 2px 10px; text-align: left; color: #d0d0d0; line-height: 13px; white-space: nowrap; }
.drawing.more::after { right: 1px; bottom: -1px; }
.drawer {
  position: absolute;
  left: 75px;
  bottom: 0;
  width: 31px;
  height: 17px;
  background: #4a4a4a;
  border: 1px solid #5e5e5e;
  color: #e0e0e0;
  display: grid;
  place-items: center;
}
.drawer svg { width: 10px; height: 10px; }
```
FILE: charts.js
```js
/* Each bar is "open high low close". Bars of a series are spread evenly from x `from` to x `to`. */
const CHARTS = {
  vold: {
    size: [463, 433], scale: [600, 19.6, -100, 391.8],
    prices: [600, 500, 400, 300, 200, 100, 0, -100],
    bands: [[8, 15], [103, 110], [197, 204], [292, 299], [386, 461]],
    times: [[16, 'Mon', 'x'], [110, 'Tue', 'd'], [204, 'Wed', 'd'], [299, 'Fri', 'd']],
    gridEnd: 10, zero: 0, last: [-32.7, '-32.7', ''], callout: [107, 533.92, 'Hi: 533.92'],
    series: [{ from: 5.3, to: 356.5, w: 6, bars: `161 178 75 111;112 374 112 281;11 62 11 60;58 92 58 92;90 111 90 109;107 124 107 118;116 131 114 131;130 138 128 135;134 169 134 169;169 169 147 156;156 173 156 162;161 164 139 158;158 180 156 179;177 205 177 199;197 276 188 274;274 534 274 534;-2 5 -27 -25;-23 -20 -42 -36;-36 -29 -42 -32;-33 -31 -55 -55;-55 -48 -59 -48;-50 -46 -59 -46;-46 -40 -63 -61;-61 -37 -63 -38;-38 -32 -46 -44;-44 -29 -50 -33;-33 -31 -42 -39;-38 -29 -54 -52;-50 -31 -67 -65;-63 -63 -150 -140;-3 9 -3 0;1 13 1 13;11 18 9 16;14 28 10 26;24 33 18 28;26 54 26 54;52 88 50 82;80 154 80 154;153 153 153 153;153 153 153 153;153 153 153 153;153 153 153 153;153 153 153 153;153 153 153 153;1 5 -8 -8;-8 5 -14 3;3 7 -16 -10;-8 -6 -31 -29;-27 -25 -50 -33;-31 -29 -44 -35;-33 -29 -44 -36;-36 -33 -44 -40;-40 -33 -42 -33` }]
  },
  add: {
    size: [503, 321], scale: [1000, 19.7, -400, 254.7],
    prices: [1000, 800, 600, 400, 200, 0, -200, -400, -600, -800],
    bands: [[33, 40], [288, 294]],
    times: [[40, 'Wed', 'd'], [84, '9'], [110, '10'], [145, '11'], [179, '12'], [211, '13'], [249, '14'], [294, 'Fri', 'd'], [329, '9'], [357, '10'], [389, '11'], [427, '12'], [466, '13']],
    hideTimes: true, zero: 0, last: [-568, '-568', ''],
    series: [
      { from: 3.6, to: 38.4, w: 4, bars: `-359 -330 -367 -359;-363 -330 -363 -330;-328 -328 -359 -359;-355 -350 -389 -389;-389 -351 -389 -359;-362 -358 -376 -371;-365 -361 -389 -389;-387 -359 -451 -451;-451 -451 -518 -469;-469 -429 -490 -453;-449 -449 -476 -476;-476 -476 -476 -476` },
      { from: 41.4, to: 175.7, w: 4, bars: `-36 123 -64 -20;-26 -26 -228 -181;-181 -4 -190 -73;-73 28 -115 28;28 218 28 210;212 212 87 135;141 159 123 129;123 296 105 290;284 350 275 350;344 445 344 421;421 440 399 399;399 576 399 576;576 636 576 630;630 641 600 600;600 600 536 536;540 552 475 475;475 546 470 546;542 636 542 622;622 650 582 582;582 612 558 594;588 618 565 618;618 636 570 570;570 612 570 600;594 612 590 600;606 606 530 546;548 671 548 665;671 683 660 660;660 660 602 602;600 647 584 647;641 675 641 653;641 755 641 755;749 808 749 802;802 808 784 784;790 802 780 780;778 832 778 808;802 886 802 886;880 963 880 951;949 983 949 963;963 983 939 939;945 951 898 898;904 904 755 814;814 1005 814 904;892 957 892 949` },
      { from: 179, to: 292, w: 4, bars: `949 949 949 949;`.repeat(30).slice(0, -1) },
      { from: 295.5, to: 452, w: 4, bars: `20 52 -44 -8;4 22 -56 -20;-20 -20 -175 -175;-175 -109 -216 -115;-119 -44 -181 -56;-60 36 -79 36;34 46 -139 -139;-133 -32 -145 -40;-50 6 -73 -2;-2 -2 -103 -73;-73 10 -79 -2;-20 10 -20 -2;4 46 -20 -20;-8 22 -44 -44;-38 -36 -133 -133;-133 -32 -133 -32;-32 -32 -210 -210;-204 -204 -312 -262;-264 -216 -264 -216;-216 -204 -268 -268;-258 -258 -363 -363;-363 -363 -496 -496;-496 -467 -496 -473;-473 -467 -520 -520;-514 -487 -532 -526;-532 -485 -532 -496;-496 -485 -556 -532;-526 -526 -622 -622;-624 -556 -624 -576;-580 -516 -580 -522;-516 -516 -570 -552;-550 -550 -592 -592;-592 -580 -645 -622;-612 -592 -645 -616;-610 -610 -667 -667;-667 -550 -667 -556;-562 -514 -562 -550;-550 -550 -616 -616;-616 -612 -651 -651;-647 -612 -647 -612;-616 -616 -645 -645;-640 -600 -640 -616;-612 -550 -612 -556;-556 -550 -586 -586;-582 -582 -616 -616;-616 -592 -622 -622;-616 -616 -729 -729;-729 -675 -729 -675;-681 -568 -681 -568;-574 -562 -574 -568` }
    ]
  },
  sectors: {
    size: [503, 107], scale: [1, 0, 0, 107], prices: [], bands: [],
    times: [[40, 'Wed'], [84, '9'], [110, '10'], [145, '11'], [179, '12'], [211, '13'], [249, '14'], [294, 'Fri'], [329, '9'], [357, '10'], [389, '11'], [427, '12'], [466, '13']],
    series: []
  },
  tnx: {
    size: [399, 433], scale: [41.45, 19.7, 41.1, 417.7],
    prices: [41.45, 41.4, 41.35, 41.3, 41.25, 41.2, 41.15, 41.1],
    bands: [[111, 161]],
    times: [[23, '12'], [67, '13'], [111, 'Fri', 'd'], [144, '8'], [183, '9'], [226, '10'], [271, '11'], [314, '12'], [358, '13']],
    last: [41.411, '41.41', 'flat'],
    series: [
      { from: 3.5, to: 110, w: 4, bars: `41.39 41.39 41.39 41.39;41.39 41.39 41.39 41.39;41.39 41.39 41.37 41.39;41.39 41.39 41.37 41.37;41.36 41.36 41.33 41.33;41.33 41.36 41.33 41.33;41.36 41.36 41.33 41.33;41.33 41.36 41.33 41.33;41.33 41.33 41.32 41.33;41.33 41.33 41.32 41.32;41.32 41.33 41.32 41.33;41.33 41.33 41.32 41.33;41.33 41.36 41.33 41.33;41.36 41.36 41.33 41.33;41.33 41.36 41.33 41.36;41.36 41.37 41.36 41.37;41.37 41.37 41.37 41.37;41.37 41.37 41.36 41.37;41.37 41.37 41.37 41.37;41.37 41.37 41.37 41.37;41.37 41.37 41.37 41.37;41.37 41.37 41.37 41.37;41.37 41.37 41.37 41.37;41.37 41.37 41.37 41.37;41.36 41.36 41.36 41.36;41.36 41.36 41.36 41.36;41.36 41.36 41.36 41.36;41.36 41.36 41.36 41.36;41.36 41.36 41.36 41.36;41.36 41.36 41.36 41.36` },
      { from: 112.3, to: 341, w: 4, bars: `41.22 41.24 41.22 41.22;41.22 41.24 41.2 41.2;41.2 41.22 41.2 41.2;41.2 41.2 41.16 41.2;41.2 41.2 41.18 41.18;41.18 41.18 41.1 41.16;41.16 41.18 41.16 41.16;41.16 41.2 41.16 41.2;41.2 41.2 41.16 41.2;41.2 41.24 41.2 41.24;41.22 41.22 41.22 41.22;41.22 41.22 41.2 41.2;41.2 41.22 41.2 41.2;41.18 41.22 41.18 41.22;41.22 41.22 41.2 41.2;41.2 41.2 41.18 41.18;41.18 41.2 41.18 41.2;41.2 41.24 41.18 41.24;41.24 41.24 41.22 41.24;41.24 41.24 41.22 41.22;41.22 41.22 41.18 41.18;41.18 41.2 41.18 41.2;41.2 41.2 41.18 41.2;41.2 41.2 41.18 41.2;41.2 41.2 41.2 41.2;41.2 41.24 41.2 41.22;41.22 41.22 41.22 41.22;41.22 41.22 41.22 41.22;41.22 41.24 41.2 41.24;41.22 41.24 41.22 41.24;41.24 41.24 41.22 41.22;41.22 41.22 41.18 41.2;41.2 41.22 41.2 41.2;41.2 41.28 41.2 41.28;41.3 41.3 41.26 41.3;41.28 41.38 41.28 41.36;41.36 41.43 41.36 41.39;41.41 41.41 41.39 41.41;41.41 41.43 41.39 41.41;41.41 41.43 41.39 41.43;41.43 41.43 41.41 41.41;41.43 41.43 41.39 41.39;41.39 41.43 41.39 41.43;41.43 41.43 41.43 41.43;41.43 41.43 41.41 41.43;41.43 41.43 41.43 41.43;41.43 41.43 41.43 41.43;41.43 41.43 41.41 41.43;41.43 41.45 41.43 41.43;41.43 41.45 41.43 41.43;41.43 41.45 41.43 41.45;41.45 41.45 41.43 41.43;41.43 41.43 41.39 41.39;41.39 41.39 41.39 41.39;41.39 41.43 41.39 41.41;41.41 41.41 41.39 41.39;41.39 41.41 41.39 41.41;41.41 41.41 41.39 41.41;41.41 41.41 41.41 41.41;41.41 41.41 41.39 41.39;41.39 41.41 41.39 41.39;41.39 41.39 41.39 41.39;41.39 41.41 41.39 41.41;41.41 41.41 41.39 41.41` }
    ]
  },
  pcn: {
    size: [281, 302], scale: [0.5, 45, 0.3, 255.7], dim: true,
    prices: [0.5, 0.45, 0.4, 0.35, 0.3], bands: [],
    times: [[12, '13'], [56, '14'], [100, 'Fri', 'd'], [135, '9'], [165, '10'], [208, '11'], [251, '12']],
    hideTimes: true, last: [0.5285, '0.53', ''], series: [],
    line: [[0, .2663], [97.7, .2663], [101.5, .4272], [104.7, .364], [108.8, .369], [112.4, .4089], [115.5, .42], [120.2, .45], [122.3, .4547], [127, .5007], [130.7, .5102], [133.8, .5142], [138, .4974], [142.2, .4889], [147.4, .4855], [151.6, .4874], [155.8, .4836], [162, .4826], [166.3, .4832], [169.4, .5022], [175.7, .5054], [184, .5117], [189.3, .5115], [195.5, .5133], [205.5, .5228], [209, .5202], [220.6, .5215], [227.4, .5268], [231.6, .5234], [238, .531], [243, .5305], [249, .532], [256, .53], [264, .532], [268, .5302], [271, .5306], [275, .5272], [278.7, .5273]]
  },
  pcnvol: {
    size: [281, 106], scale: [75, 16.7, 25, 77.3], dim: true,
    prices: [75, 50, 25], bands: [], unit: 53,
    times: [[12, '13'], [56, '14'], [100, 'Fri'], [135, '9'], [165, '10'], [208, '11'], [251, '12']],
    series: [],
    volume: [{ from: 100.9, to: 277.7, v: [1.5, 6, 9, 12, 14.5, 17, 21, 24, 27, 29, 31, 33.5, 36, 38, 40, 42, 44, 46, 48, 50, 51.5, 53, 54.5, 56, 57.5, 59, 60.5, 62, 63.5, 64.5, 66, 67, 68.5, 70, 71, 72, 73.5, 75, 76, 77, 78, 79, 80, 81, 82, 83, 84, 85, 86.5, 14] }]
  },
  tick: {
    size: [463, 432], scale: [500, 28.8, -800, 421.4],
    prices: [500, 400, 300, 200, 100, 0, -100, -200, -300, -400, -500, -600, -700, -800],
    bands: [[94, 105]],
    times: [[29, '14:00'], [105, 'Fri', 'd'], [138, '9:00'], [204, '10:00'], [270, '11:00'], [335, '12:00'], [400, '13:00'], [450, '13:45']],
    levels: [0, -600], last: [409, '409', ''],
    series: [
      { from: 5.5, to: 102, w: 5, bars: `209 209 209 209;`.repeat(18).slice(0, -1) },
      { from: 108.3, to: 376.2, w: 5, bars: `4 38 -115 -62;-58 61 -125 -75;-92 11 -227 -115;-111 97 -174 11;18 210 -174 77;71 349 -15 259;253 253 -287 -108;-111 243 -214 124;134 243 -58 67;77 150 -313 34;31 263 -85 77;84 137 -161 117;134 243 -234 44;51 256 -171 -155;-161 -19 -254 -39;-49 369 -62 246;246 246 -426 -403;-406 47 -466 18;18 220 -52 180;190 223 -280 -88;-85 -35 -466 -466;-466 -294 -704 -449;-443 67 -456 -121;-121 -121 -423 -241;-234 -15 -357 -347;-350 200 -357 14;-39 74 -168 -82;-82 -62 -558 -506;-499 130 -585 130;134 306 97 157;150 150 -128 -128;-131 -131 -403 -400;-403 -121 -545 -181;-184 -2 -211 -68;-72 -58 -479 -393;-393 518 -393 316;316 531 -231 -231;-234 -204 -602 -244;-244 -178 -323 -178;-184 220 -191 47;41 61 -118 -58;-55 153 -58 -19;-12 339 -29 240;223 249 -364 -360;-366 -49 -416 -124;-124 -118 -320 -191;-188 -164 -787 -522;-525 84 -525 18;11 465 -39 283;273 415 263 408` }
    ]
  },
  spx: {
    size: [505, 432], scale: [6950, 29.7, 6900, 279.3],
    prices: [6950, 6940, 6930, 6920, 6910, 6900, 6890, 6880, 6870],
    bands: [[197, 212]],
    times: [[12, '9'], [43, '10'], [76, '11'], [110, '12'], [143, '13'], [177, '14'], [212, 'Wed', 'd'], [256, '9'], [283, '10'], [337, 'Fri', 'd'], [369, '9'], [395, '10'], [429, '11'], [462, '12'], [495, '13']],
    last: [6927.5, '6927.24', ''], callout: [345, 6945.6, 'Hi: 6945.77'],
    series: [
      { from: 3.2, to: 198.6, w: 3, bars: `6883.1 6887.3 6881.5 6887.3;6886.9 6891.9 6886.9 6888.3;6888.3 6889.5 6884.5 6884.5;6884.9 6884.9 6879.1 6882.5;6882.3 6882.3 6873.1 6874.3;6873.9 6877.1 6872.5 6877.1;6877.1 6879.5 6872.7 6876.1;6876.3 6881.9 6876.3 6881.9;6881.7 6884.9 6881.7 6884.1;6884.1 6884.7 6879.1 6881.1;6881.1 6886.1 6881.1 6885.5;6885.1 6888.7 6885.1 6888.7;6888.5 6890.9 6888.5 6890.6;6890.1 6891 6888.1 6890.5;6890.2 6890.7 6890 6890.7;6890.2 6893.7 6889.3 6892.3;6892.2 6895.3 6892.2 6893.9;6893.7 6895.3 6893 6893;6893 6894 6892.2 6893.7;6893.4 6896.3 6893.4 6896.1;6896 6896.3 6894.1 6894.1;6895.3 6896.9 6894.1 6894.1;6894.7 6894.7 6893.1 6893.7;6893.9 6894.7 6892.9 6894.4;6894.2 6897.3 6894.2 6896.3;6896.5 6897.5 6896.5 6897.5;6896.6 6899.1 6896.6 6898.3;6897.7 6899.3 6897.7 6898.5;6898.5 6899.1 6896.1 6898.1;6897.7 6899.1 6897.7 6898.9;6898.1 6899.5 6898.1 6899.5;6898.3 6900 6898.3 6899.5;6899.5 6901.1 6899.5 6900.7;6900.7 6901.1 6899.5 6899.5;6900.3 6900.3 6897.7 6898.5;6898.6 6900 6898.6 6900;6899.9 6900.1 6898.7 6898.7;6898.3 6899.7 6896.5 6899.3;6898.3 6900.1 6898.3 6899.3;6899.1 6899.5 6898.6 6898.6;6898.5 6902.7 6898.5 6902.3;6901.1 6902.5 6901.1 6902;6902.3 6903 6901.5 6903;6902.7 6905.9 6902.7 6905;6905.5 6905.5 6903.5 6904.3;6904.2 6906.5 6904.2 6905.5;6904.7 6905.9 6904.7 6905.4;6905.6 6906.1 6904.9 6904.9;6905.8 6906.3 6904.5 6904.5;6904.9 6905.3 6903.8 6903.8;6905 6905 6903.7 6903.7;6903.7 6906.7 6903.7 6905.7;6905.7 6906.7 6905.7 6906.1;6906.2 6906.3 6905.8 6905.8;6905.8 6907.9 6905.8 6907.1;6906.6 6907.7 6906.6 6907.3;6907.7 6908.3 6906.6 6906.6;6907.5 6907.9 6906.3 6906.3;6906.3 6906.9 6905.9 6906.7;6906.4 6907.5 6906.4 6907;6907.4 6907.7 6906.8 6906.8;6907.4 6907.7 6906.7 6906.7;6906.8 6908.9 6906.8 6908.1;6908.2 6908.7 6907.4 6907.4;6908.3 6908.7 6907.3 6907.3;6907.4 6908.4 6907.4 6907.8;6908 6908.2 6906.6 6906.6;6906.7 6908.5 6906.7 6908;6907.8 6908.5 6906.4 6906.4;6907.7 6908.7 6906.6 6906.6;6908 6908 6906.1 6906.1;6906.1 6908 6906.1 6908;6907.7 6908.4 6904.7 6908.1;6908.1 6910.9 6907 6909.3;6909.3 6909.9 6909.3 6909.9` },
      { from: 200, to: 211, w: 4, bars: `6909.8 6909.8 6909.8 6909.8;6909.8 6909.8 6909.8 6909.8;6909.8 6909.8 6909.8 6909.8;6909.8 6909.8 6909.8 6909.8` },
      { from: 213.8, to: 322.5, w: 3, bars: `6904.9 6912.5 6904.9 6912.1;6912.7 6913.9 6908.7 6908.7;6908.9 6915.3 6908.9 6911.9;6912 6915.3 6912 6915.3;6912.9 6915.9 6912.9 6915.5;6915.7 6916.3 6914.5 6914.5;6914.5 6916.9 6913.9 6916.7;6915.7 6918.1 6915.7 6917.9;6916.9 6920.3 6916.9 6919.9;6919.1 6921.5 6919.1 6920.3;6920.5 6921.1 6916.7 6917.7;6917.7 6920.3 6917.7 6920.3;6920.3 6920.9 6918.5 6919.3;6919.3 6920.9 6919.3 6920.5;6920.1 6921.3 6920.1 6920.9;6920.5 6921.9 6920.5 6921.1;6921.3 6923.1 6921.3 6922.5;6922.1 6923.9 6922.1 6923.3;6923.7 6924.5 6922.7 6923.7;6923.1 6925.5 6922.3 6925.1;6924.9 6928.1 6923.7 6927.9;6927.9 6928 6926 6926;6927.3 6929.1 6927.3 6928.7;6928.9 6929.3 6927.7 6928.6;6928.7 6930.7 6928.7 6930.1;6930.1 6934.1 6930.1 6933.3;6932.3 6934.3 6932.3 6933.7;6933.5 6934.1 6932.7 6932.7;6933.3 6933.7 6931.3 6932.9;6932.5 6933.3 6932.5 6933.1;6932.7 6933.5 6932.7 6933.3;6933.3 6935.1 6933.3 6934.5;6934.5 6935.9 6934.5 6935.3;6934.9 6935.5 6932.5 6932.5;6934.1 6935.5 6932.3 6932.3;6932.1 6935.7 6932.1 6935.1;6934.9 6937.5 6934.9 6936.7;6936.7 6937.3 6934.5 6934.5;6934.7 6935.1 6932.9 6932.9;6934.7 6934.7 6932.5 6932.9;6932.9 6934 6931.3 6932.5;6932.7 6935.1 6930.1 6931.7;6931.3 6933.3 6931.3 6932.1` },
      { from: 325, to: 335, w: 4, bars: `6932.1 6932.1 6932.1 6932.1;6932.1 6932.1 6932.1 6932.1;6932.1 6932.1 6932.1 6932.1;6932.1 6932.1 6932.1 6932.1` },
      { from: 337.7, to: 463.5, w: 3, bars: `6935.9 6940.4 6932.3 6940.4;6938.5 6942.9 6938.5 6942.3;6941.3 6945 6941.3 6944.7;6944.9 6945.9 6941.3 6941.3;6941.3 6941.7 6934.1 6937.5;6937.5 6938.9 6934.9 6935.7;6936.9 6937.7 6927.5 6930.7;6930.9 6933.3 6930.9 6932.7;6932.3 6934.7 6927.5 6927.5;6927.1 6932.5 6925.3 6931.9;6931.7 6935.9 6931.7 6935.3;6934.9 6936.7 6933.7 6935.9;6935.7 6938.5 6935.7 6938.1;6937.7 6938.7 6934.7 6934.7;6935.7 6936.3 6933.9 6933.9;6934.1 6936.5 6933.3 6935.5;6935.3 6936.1 6932.9 6934.7;6935.1 6937.3 6933.9 6936.7;6936.1 6938.1 6936.1 6937.7;6937.7 6938.1 6934.1 6934.1;6934.1 6934.7 6927.9 6927.9;6927.9 6929.3 6926.7 6928.6;6928.3 6932.3 6927.7 6931.5;6931.3 6931.7 6930.4 6930.4;6931.1 6932.1 6930.1 6930.1;6930.3 6931.7 6930.3 6931.3;6931.3 6931.9 6927.7 6928.4;6927.7 6930.1 6927.7 6929.5;6929.5 6930.1 6927.7 6928.9;6928.7 6929.7 6926.9 6926.9;6927.3 6928.1 6925.1 6925.1;6925.3 6925.7 6922.9 6923.5;6923.3 6924.3 6923.3 6923.9;6923.5 6924.9 6922.5 6924.4;6924.3 6930.1 6924.3 6929.7;6929.7 6930.3 6926.8 6926.8;6926.9 6927.3 6925.3 6925.3;6925.3 6925.7 6924.1 6924.7;6924.7 6927.5 6924.7 6926.7;6925.7 6927.1 6923.9 6926.5;6925.7 6928.1 6925.7 6927.5;6926.7 6928.3 6926.7 6927.7;6928.1 6929.1 6925.9 6927.3;6927.7 6928.1 6926.1 6927.1;6927.7 6927.7 6925.3 6925.3;6925.3 6925.9 6921.5 6923.3;6923.3 6925.9 6922.5 6925.5;6925.3 6927.7 6925.3 6927.1;6927.1 6927.7 6927.1 6927.5` }
    ]
  },
  vix: {
    size: [402, 432], scale: [14.3, 11.7, 13.85, 362.3],
    prices: [14.3, 14.25, 14.2, 14.15, 14.1, 14.05, 14, 13.95, 13.9, 13.85, 13.8],
    bands: [[0, 158]],
    times: [[2, '5'], [46, '6'], [91, '7'], [135, '8'], [180, '9'], [225, '10'], [269, '11'], [314, '12'], [359, '13']],
    last: [13.793, '13.79', 'flat'],
    series: [{ from: 4, to: 342.3, w: 4, bars: `14.14 14.14 14.14 14.14;14.14 14.16 14.14 14.16;14.16 14.16 14.16 14.16;14.16 14.17 14.16 14.17;14.17 14.18 14.17 14.18;14.18 14.18 14.16 14.17;14.17 14.18 14.17 14.18;14.18 14.18 14.18 14.18;14.18 14.2 14.18 14.2;14.2 14.22 14.2 14.21;14.21 14.22 14.21 14.21;14.21 14.21 14.2 14.21;14.21 14.21 14.2 14.21;14.21 14.21 14.21 14.21;14.21 14.21 14.2 14.2;14.2 14.2 14.19 14.19;14.2 14.2 14.18 14.18;14.18 14.18 14.18 14.18;14.18 14.18 14.17 14.17;14.17 14.17 14.16 14.16;14.16 14.16 14.12 14.14;14.14 14.16 14.13 14.16;14.16 14.16 14.16 14.16;14.16 14.17 14.16 14.17;14.17 14.19 14.14 14.17;14.17 14.17 14.17 14.17;14.17 14.18 14.17 14.18;14.18 14.18 14.14 14.17;14.17 14.17 14.14 14.15;14.15 14.15 14.13 14.13;14.15 14.15 14.11 14.11;14.11 14.12 14.09 14.09;14.09 14.1 14.08 14.1;14.1 14.11 14.08 14.09;14.1 14.12 14.1 14.12;14.12 14.13 14.11 14.11;14.11 14.12 14.11 14.12;14.12 14.12 14.11 14.11;14.11 14.11 14.09 14.09;14.09 14.1 14.08 14.1;14.1 14.1 14.1 14.1;14.09 14.09 14.09 14.09;14.19 14.19 14.06 14.07;14.1 14.1 14.01 14.01;14.01 14.1 13.97 14.1;14.1 14.14 14.1 14.13;14.13 14.23 14.13 14.17;14.18 14.21 14.16 14.17;14.17 14.29 14.17 14.21;14.23 14.23 14.17 14.17;14.15 14.19 14.13 14.16;14.16 14.21 14.13 14.13;14.12 14.12 14.03 14.03;14.03 14.07 13.99 13.99;13.98 13.99 13.95 13.95;13.96 13.97 13.94 13.97;13.96 13.97 13.95 13.96;13.97 13.97 13.88 13.88;13.88 13.94 13.88 13.91;13.9 13.91 13.87 13.87;13.87 13.87 13.85 13.85;13.85 13.9 13.85 13.88;13.89 13.99 13.89 13.99;13.99 14.02 13.98 14;14 14.01 13.92 13.93;13.93 13.95 13.91 13.92;13.91 13.93 13.91 13.92;13.92 13.92 13.88 13.89;13.89 13.91 13.87 13.89;13.89 13.94 13.89 13.94;13.94 13.95 13.9 13.91;13.9 13.91 13.9 13.91;13.91 13.96 13.91 13.95;13.95 13.97 13.95 13.96;13.97 13.99 13.96 13.97;13.97 13.97 13.94 13.96;13.96 13.97 13.94 13.94;13.94 13.94 13.83 13.83;13.83 13.86 13.82 13.86;13.86 13.9 13.86 13.87;13.87 13.88 13.86 13.88;13.87 13.87 13.83 13.83;13.83 13.87 13.83 13.84;13.83 13.83 13.82 13.83;13.82 13.82 13.79 13.79;13.79 13.8 13.78 13.8;13.81 13.81 13.78 13.79;13.79 13.82 13.79 13.8;13.81 13.9 13.8 13.87;13.86 13.88 13.83 13.83;13.83 13.83 13.79 13.79;13.79 13.79 13.79 13.79` }]
  },
  pcnd: {
    size: [276, 271], scale: [0.8, 12.7, 0, 231.7], dim: true,
    prices: [0.8, 0.7, 0.6, 0.5, 0.4, 0.3, 0.2, 0.1, 0, -0.1], bands: [],
    times: [[8, '12'], [45, '13'], [82, '14'], [119, 'Fri', 'd'], [154, '9'], [181, '10'], [217, '11'], [251, '12']],
    hideTimes: true, last: [0.557, '0.55', 'falling'], callout: [10, 0, 'Lo: 0', 'below'], series: [],
    line: [[0.3, .821], [4, .81], [6.7, .795], [9.7, 0], [118.7, 0], [121.7, .358], [124.3, .343], [127.7, .428], [130.3, .447], [136.3, .469], [140.3, .493], [144.3, .497], [149, .511], [152, .5105], [155.7, .5125], [158.3, .531], [164.3, .5305], [167, .542], [170.7, .538], [173.3, .5415], [177.7, .541], [180.3, .536], [195.7, .538], [202.3, .549], [207.3, .5487], [210.7, .5455], [213, .549], [222.3, .548], [231.7, .5515], [237.3, .549], [247.3, .5485], [252.3, .5455], [257.3, .549], [269, .55], [271, .5525], [273.7, .5524]]
  },
  pcndvol: {
    size: [276, 136], scale: [150, 20.7, 50, 98.7], dim: true,
    prices: [150, 100, 50, 0], bands: [], unit: 68,
    times: [[8, '12'], [45, '13'], [82, '14'], [119, 'Fri'], [154, '9'], [181, '10'], [217, '11'], [251, '12']],
    series: [],
    volume: [
      { from: 3.3, to: 6.3, v: [139, 143] },
      { from: 120.3, to: 272.7, v: [4, 16, 24, 32, 39, 44, 50, 55, 60.5, 65, 70, 73, 78, 83, 89, 94, 99, 102, 106, 109, 113, 116, 118, 121, 124, 125, 128, 130, 133, 134, 136, 138, 140, 142, 144, 147, 150, 151, 153, 154, 157, 158, 160, 162, 164, 166, 167, 169, 171, 25] }
    ]
  }
};

const span = (cls, text) => {
  const el = document.createElement('span');
  el.className = cls;
  el.textContent = text;
  return el;
};

function draw(plot, c) {
  const [W, H] = c.size;
  const [v1, y1, v2, y2] = c.scale;
  const y = v => y1 + (v - v1) * (y2 - y1) / (v2 - v1);
  const R = Math.round;
  const out = [];
  const line = (cls, a, b, d, e) => out.push(`<path class="${cls}" d="M${a} ${b}L${d} ${e}"/>`);
  const rect = (cls, x, t, w, h) => out.push(`<rect class="${cls}" x="${x}" y="${t}" width="${w}" height="${h}"/>`);

  for (const [a, b] of c.bands) rect('band', a, 0, b - a, H);

  for (const p of c.prices) {
    const py = R(y(p)) - 0.5;
    if (py > H - 3) continue;
    line('grid', 10, py, W - (c.gridEnd || 6), py);
    line('tick', 0, py, 5, py);
    line('tick', W - 5, py, W, py);
  }
  for (const [x, , kind] of c.times) {
    const px = x + 0.5;
    if (kind === 'x') { line('expiry-line', px, 0, px, H); continue; }
    if (kind === 'd') line('day', px, 0, px, H);
    else {
      line('grid', px, 10, px, H - 6);
      line('tick', px, 0, px, 5);
    }
    line('tick', px, H - 4, px, H);
  }

  for (const s of c.series) {
    const bars = s.bars.split(';').map(b => b.trim().split(' ').map(Number));
    const step = (s.to - s.from) / (bars.length - 1);
    bars.forEach(([o, h, l, cl], i) => {
      const x = s.from + i * step;
      const cls = cl > o ? 'rise' : cl < o ? 'fall' : 'still';
      const top = R(y(Math.max(o, cl))), bot = R(y(Math.min(o, cl)));
      const left = R(x - s.w / 2);
      const hi = R(y(h)), lo = R(y(l));
      if (lo > hi) rect(cls, left + Math.floor(s.w / 2), hi, 1, lo - hi);
      rect(cls, left, top, s.w, Math.max(1, bot - top));
    });
  }

  for (const s of c.volume || []) {
    const step = (s.to - s.from) / (s.v.length - 1);
    s.v.forEach((v, i) => rect('volume', R(s.from + i * step), R(y(v)), 1, H - R(y(v)) + 2));
  }

  (c.line || []).slice(1).forEach(([x, v], i) => {
    const [px, pv] = c.line[i];
    const dir = v > pv ? 'rise' : v < pv ? 'fall' : 'still';
    out.push(`<path class="seg seg-${dir}" d="M${px} ${y(pv).toFixed(1)}L${x} ${y(v).toFixed(1)}"/>`);
  });

  if (c.zero !== undefined) line('zero', 0, R(y(c.zero)) - 0.5, W, R(y(c.zero)) - 0.5);
  for (const v of c.levels || []) line('level', 0, R(y(v)), W, R(y(v)));

  plot.insertAdjacentHTML('afterbegin',
    `<svg class="${c.dim ? 'dim' : ''}" viewBox="0 0 ${W} ${H}" preserveAspectRatio="none">${out.join('')}</svg>`);

  const axis = plot.nextElementSibling;
  for (const p of c.prices) {
    const el = span('', String(p));
    el.style.top = `${y(p) / (H + 1) * 100}%`;
    axis.append(el);
  }
  if (c.last) {
    const el = span(`last-price ${c.last[2]}`, c.last[1]);
    el.style.top = `${y(c.last[0]) / (H + 1) * 100}%`;
    axis.append(el);
  }
  if (c.unit) {
    const el = span('unit', '<millions>');
    el.style.top = `${c.unit / H * 100}%`;
    axis.append(el);
  }
  if (c.callout) {
    const [x, v, text, side] = c.callout;
    const el = span(`callout ${side || ''}`, text);
    el.style.left = `${x / W * 100}%`;
    el.style.top = `${y(v) / H * 100}%`;
    plot.append(el);
  }
  if (!c.hideTimes) {
    const times = plot.closest('.chart').querySelector('.time-axis');
    for (const [x, text] of c.times) {
      const el = span('', text);
      el.style.left = `${x / W * 100}%`;
      times.append(el);
    }
  }
}

document.querySelectorAll('.plot').forEach(p => draw(p, CHARTS[p.dataset.chart]));
```
